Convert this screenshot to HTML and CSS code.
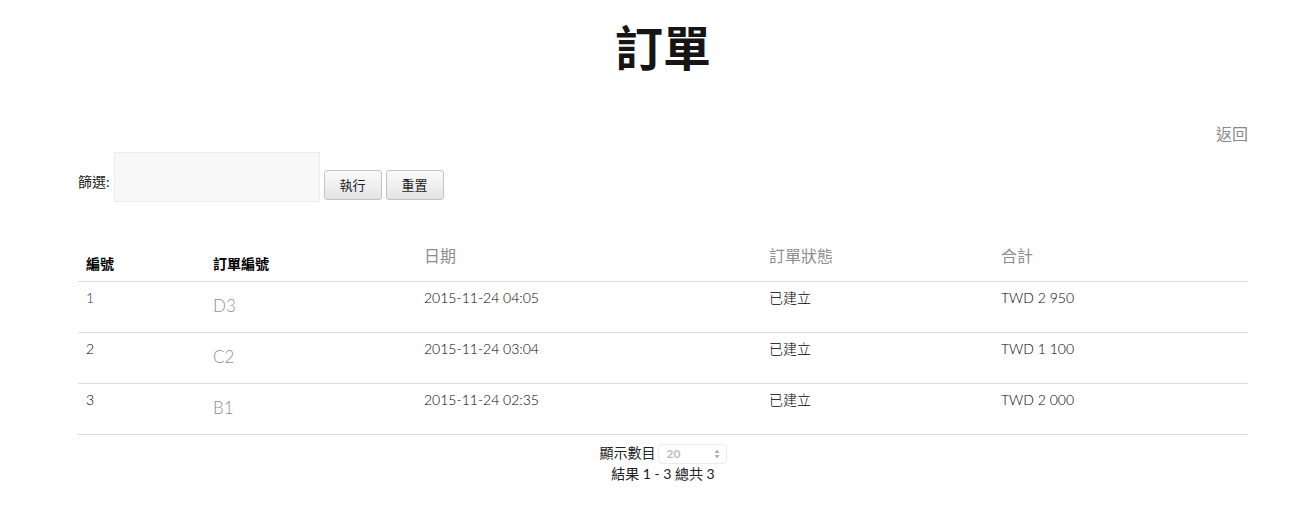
FILE: index.html
```html
<!DOCTYPE html>
<html lang="zh-Hant">
<head>
    <meta charset="UTF-8">
    <meta name="viewport" content="width=device-width, initial-scale=1.0">
    <link rel="stylesheet" href="styles.css">
    <title>訂單</title>
</head>
<body>
    <div class="page">
        <h1 class="titulo">訂單</h1>

        <div class="voltar">
            <a href="#">返回</a>
        </div>

        <div class="filtro">
            <label for="filtro">篩選:</label>
            <input id="filtro" type="text">
            <button>執行</button>
            <button>重置</button>
        </div>

        <table class="pedidos">
            <colgroup>
                <col class="c1"><col class="c2"><col class="c3"><col class="c4"><col class="c5">
            </colgroup>
            <thead>
                <tr>
                    <th class="forte">編號</th>
                    <th class="forte">訂單編號</th>
                    <th class="leve">日期</th>
                    <th class="leve">訂單狀態</th>
                    <th class="leve">合計</th>
                </tr>
            </thead>
            <tbody>
                <tr>
                    <td><a href="#">1</a></td>
                    <td class="ref">D3</td>
                    <td>2015-11-24 04:05</td>
                    <td>已建立</td>
                    <td>TWD 2 950</td>
                </tr>
                <tr>
                    <td>2</td>
                    <td class="ref">C2</td>
                    <td>2015-11-24 03:04</td>
                    <td>已建立</td>
                    <td>TWD 1 100</td>
                </tr>
                <tr>
                    <td>3</td>
                    <td class="ref">B1</td>
                    <td>2015-11-24 02:35</td>
                    <td>已建立</td>
                    <td>TWD 2 000</td>
                </tr>
            </tbody>
        </table>

        <div class="rodape">
            <div class="linha">
                顯示數目<span class="seletor">20
                    <svg class="setas" width="6" height="10" viewBox="0 0 6 10">
                        <path d="M3 0.5 L5.5 4 L0.5 4 Z M3 9.5 L5.5 6 L0.5 6 Z" fill="#b0b0b0"/>
                    </svg>
                </span>
            </div>
            <div class="linha">結果 1 - 3 總共 3</div>
        </div>
    </div>
</body>
</html>
```

FILE: styles.css
```css
*{
    box-sizing: border-box;
}
body{
    margin: 0;
    font-family: "Lato", "Noto Sans CJK TC", sans-serif;
    color: #111;
    background: #fff;
}
.page{
    width: 1170px;
    margin-left: 78px;
}
.titulo{
    margin: 0;
    padding-top: 16px;
    font-family: "Noto Sans CJK TC", sans-serif;
    font-size: 48px;
    line-height: 58px;
    text-align: center;
    font-weight: 700;
    color: #151515;
}
.voltar{
    margin-top: 48px;
    height: 24px;
    text-align: right;
}
.voltar a{
    font-size: 16px;
    line-height: 24px;
    color: #8a8a8a;
    text-decoration: none;
}
.filtro{
    display: flex;
    align-items: center;
    height: 50px;
    margin-top: 6px;
    font-size: 14px;
}
.filtro label{
    padding-top: 8px;
    margin-right: 4px;
    color: #222;
}
.filtro input{
    width: 206px;
    height: 50px;
    border: 1px solid #ececec;
    background: #f8f8f8;
    outline: none;
}
.filtro button{
    width: 58px;
    height: 30px;
    margin-top: 15px;
    margin-left: 4px;
    border: 1px solid #c4c4c4;
    border-radius: 3px;
    background: linear-gradient(#fbfbfb, #e4e4e4);
    font-family: inherit;
    font-size: 13px;
    color: #222;
    cursor: pointer;
}
.pedidos{
    width: 100%;
    margin-top: 30px;
    border-collapse: collapse;
    table-layout: fixed;
}
.c1{ width: 127px; }
.c2{ width: 211px; }
.c3{ width: 345px; }
.c4{ width: 232px; }
.c5{ width: 255px; }
.pedidos th{
    height: 49px;
    padding: 0 8px;
    text-align: left;
    border-bottom: 1px solid #dcdcdc;
}
.pedidos th.forte{
    vertical-align: bottom;
    padding-bottom: 8px;
    font-size: 14px;
    font-weight: 700;
    color: #000;
}
.pedidos th.leve{
    vertical-align: bottom;
    padding-bottom: 14px;
    font-size: 16px;
    font-weight: 400;
    color: #8d8d8d;
}
.pedidos td{
    height: 51px;
    padding: 6px 8px 0;
    vertical-align: top;
    font-size: 14px;
    font-weight: 300;
    line-height: 20px;
    border-bottom: 1px solid #dcdcdc;
    color: #000;
}
.pedidos td a{
    color: #3b2a6a;
    text-decoration: none;
}
.pedidos td.ref{
    padding-top: 14px;
    font-size: 17px;
    color: #8f8f8f;
}
.rodape{
    padding-top: 8px;
    text-align: center;
    font-size: 14px;
    color: #222;
}
.linha{
    line-height: 20px;
}
.seletor{
    display: inline-flex;
    align-items: center;
    justify-content: space-between;
    width: 69px;
    height: 20px;
    margin-left: 2px;
    padding: 0 6px 0 8px;
    vertical-align: middle;
    border: 1px solid #ececec;
    border-radius: 4px;
    font-size: 12px;
    font-weight: 700;
    color: #bdbdbd;
    text-align: left;
}
.setas{
    display: block;
}
```
